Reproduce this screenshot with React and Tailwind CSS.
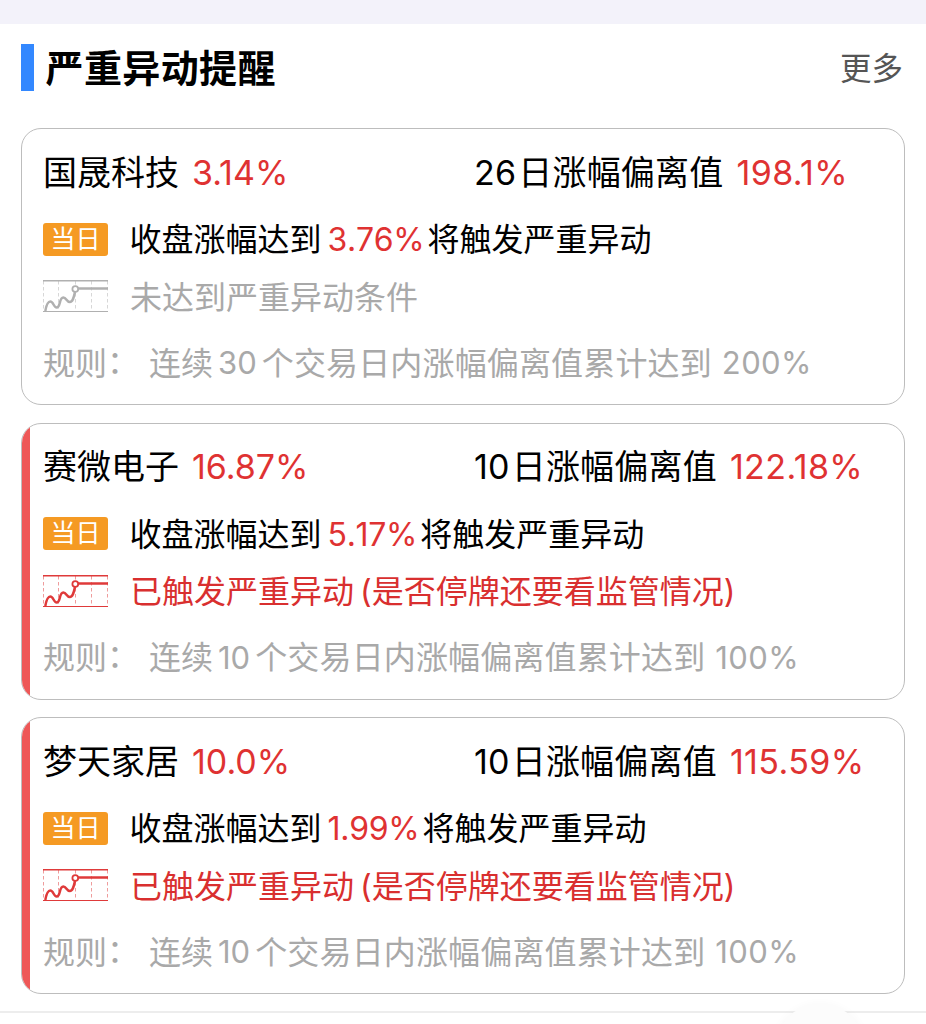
const FONT = "font-['Inter','Noto_Sans_CJK_SC',sans-serif]";

const alerts = [
    {
        name: '国晟科技',
        change: '3.14%',
        days: 26,
        deviation: '198.1%',
        target: '3.76%',
        triggered: false,
        ruleDays: 30,
        ruleLimit: '200%',
    },
    {
        name: '赛微电子',
        change: '16.87%',
        days: 10,
        deviation: '122.18%',
        target: '5.17%',
        triggered: true,
        ruleDays: 10,
        ruleLimit: '100%',
    },
    {
        name: '梦天家居',
        change: '10.0%',
        days: 10,
        deviation: '115.59%',
        target: '1.99%',
        triggered: true,
        ruleDays: 10,
        ruleLimit: '100%',
    },
];

function TrendIcon({ className }) {
    return (
        <svg className={`h-[34px] w-[65px] shrink-0 ${className}`} viewBox="0 0 65 34" fill="none" stroke="currentColor">
            <path d="M0 0.8h65" strokeWidth="1.6" />
            <path d="M0 31.500h65" strokeWidth="1.2" />
            <path d="M0.5 1v30M15.500 1v30M32.500 1v30M48.500 1v30M64.500 1v30" strokeWidth="1" strokeDasharray="3.5 2.5" opacity="0.5" />
            <path
                d="M2.300 31C3.200 26 4.500 21.500 7.300 21.500C10.500 21.500 10.500 27.500 13.700 27.500C17.700 27.500 16 17.500 20.300 17.500C23.500 17.500 23.500 22 26.800 22C30 22 31 16.500 32 12"
                strokeWidth="2.5"
            />
            <path d="M35 8.500h30" strokeWidth="2.4" />
            <circle cx="32.300" cy="9" r="2.900" strokeWidth="1.8" fill="white" />
        </svg>
    );
}

function AlertCard({ alert }) {
    return (
        <div className="relative h-[277px] overflow-hidden rounded-[20px] border border-[#bdbdbd] pt-[11px] pl-[21px]">
            {/* Red edge on triggered stocks */}
            {alert.triggered && <div className="absolute inset-y-0 left-0 w-[8px] bg-[#ee5757]" />}

            <div className="flex h-[64px] items-center text-[34px] whitespace-nowrap">
                <div className="w-[431px]">
                    <span>{alert.name}</span>
                    <span className="ml-[13px] text-[#df3232]">{alert.change}</span>
                </div>
                <div>
                    <span className="tracking-[0.2px]">{alert.days}</span>
                    <span className="ml-[2px] tracking-[0.2px]">日涨幅偏离值</span>
                    <span className="ml-[13px] tracking-[0.4px] text-[#df3232]">{alert.deviation}</span>
                </div>
            </div>

            <div className="flex h-[72px] items-center text-[32px] whitespace-nowrap">
                <span className="mb-[2px] flex h-[33px] w-[65px] shrink-0 items-center justify-center rounded-[3px] bg-[#f59a23] pt-px text-[25px] text-white">
                    当日
                </span>
                <div className="ml-[21.5px]">
                    <span>收盘涨幅达到</span>
                    <span className="mr-[3px] ml-[6px] tracking-[-0.3px] text-[#df3232] [font-kerning:none]">{alert.target}</span>
                    <span>将触发严重异动</span>
                </div>
            </div>

            <div className={`flex h-[42px] items-center text-[32px] whitespace-nowrap ${alert.triggered ? 'text-[#d92f2f]' : 'text-[#a9a9a9]'}`}>
                <TrendIcon className={alert.triggered ? 'text-[#df3a3a]' : 'text-[#b0b0b0]'} />
                <div className="ml-[22px] pt-px">
                    {alert.triggered ? (
                        <>
                            <span>已触发严重异动</span>
                            <span className="ml-[6px]">(是否停牌还要看监管情况)</span>
                        </>
                    ) : (
                        <span>未达到严重异动条件</span>
                    )}
                </div>
            </div>

            <div className="mt-[18px] flex h-[54px] items-center pt-px text-[32px] whitespace-nowrap text-[#a9a9a9]">
                <span className="w-[106px]">
                    规则<span className="inline-block -translate-y-[2px]">：</span>
                </span>
                <span>连续</span>
                <span className="mx-[5px] text-[31px]">{alert.ruleDays}</span>
                <span className="tracking-[0.15px]">个交易日内涨幅偏离值累计达到</span>
                <span className="ml-[10px] text-[31px] tracking-[0.4px]">{alert.ruleLimit}</span>
            </div>
        </div>
    );
}

export default function App() {
    return (
        <div className={`relative h-[1024px] w-[926px] overflow-hidden bg-white text-black ${FONT}`}>
            <div className="h-[24px] bg-[#f3f2fa]" />

            <div className="flex h-[104px] items-start pt-[20px] pr-[23px] pl-[21px]">
                <div className="h-[47px] w-[13px] bg-[#3388ff]" />
                <h1 className="ml-[11.5px] text-[38px] leading-[49px] font-bold tracking-[0.4px]">严重异动提醒</h1>
                <span className="ml-auto text-[31.5px] leading-[49px] text-[#555555]">更多</span>
            </div>

            <div className="flex flex-col gap-[17.5px] px-[21px]">
                {alerts.map((alert) => (
                    <AlertCard key={alert.name} alert={alert} />
                ))}
            </div>

            <div className="mt-[17px] h-[2px] bg-[#ededed]" />

            {/* Floating button, mostly below the fold */}
            <div className="absolute top-[1004px] left-[774px] h-[92px] w-[92px] rounded-full bg-[#fcfcfc] shadow-[0_0_10px_rgba(0,0,0,0.03)]" />
        </div>
    );
}
